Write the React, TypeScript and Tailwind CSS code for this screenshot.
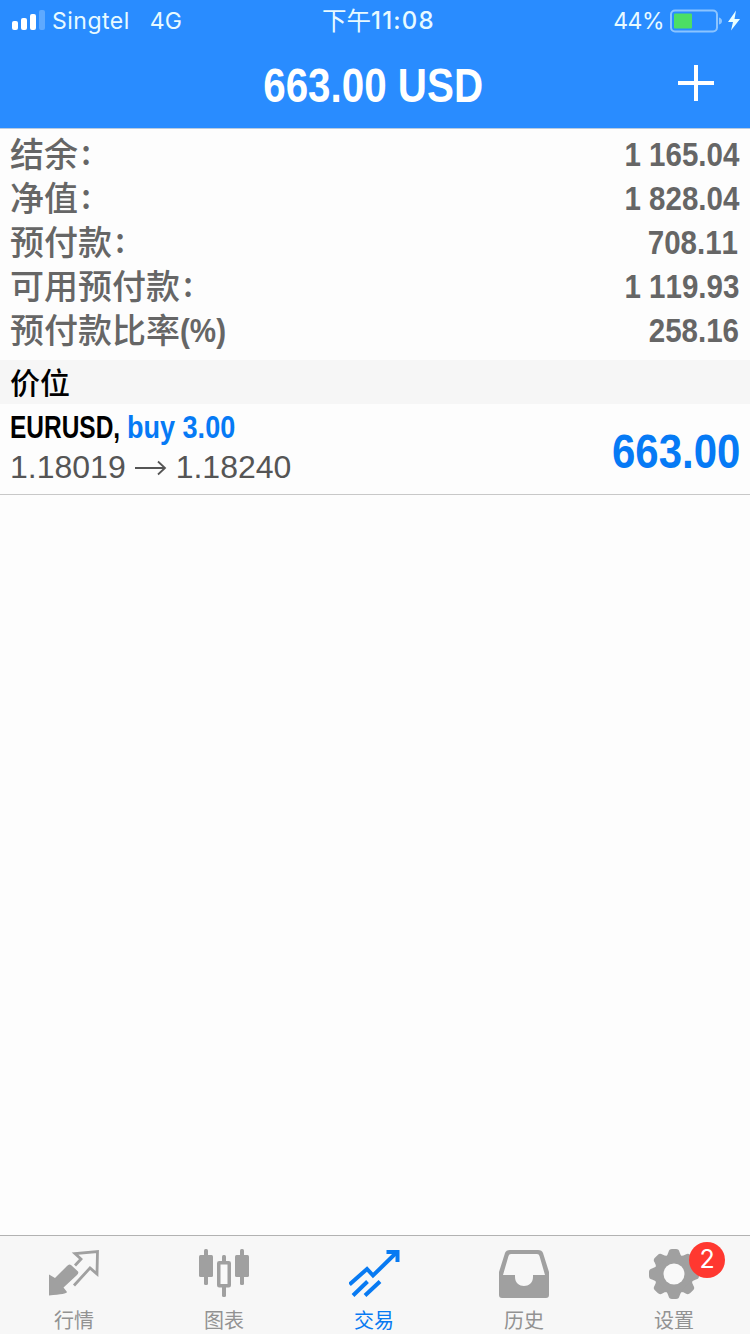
import React from "react";

const bold = "font-['Liberation_Sans','Noto_Sans_CJK_SC',sans-serif] font-bold whitespace-pre [font-kerning:none]";

const account = [
  { label: "结余", colon: true, value: "1 165.04" },
  { label: "净值", colon: true, value: "1 828.04" },
  { label: "预付款", colon: true, value: "708.11" },
  { label: "可用预付款", colon: true, value: "1 119.93" },
  { label: "预付款比率", colon: false, value: "258.16" },
];

function StatusBar() {
  return (
    <div className="flex h-[42px] items-center font-['Inter','Noto_Sans_CJK_SC',sans-serif] text-[23px] leading-[42px] text-[#e8faff]">
      <div className="flex w-[322px] items-center pl-3">
        <svg width="34" height="22" viewBox="0 0 34 22" className="mr-[6px]" fill="#fff">
          <rect x="0" y="11" width="6" height="9" rx="2" />
          <rect x="9" y="8" width="6" height="12" rx="2" />
          <rect x="18" y="4" width="6" height="16" rx="2" />
          <rect x="27" y="0" width="6" height="20" rx="2" opacity="0.25" />
        </svg>
        <span className="tracking-[0.5px]">Singtel</span>
        <span className="ml-[20px]">4G</span>
      </div>
      <span className="font-['Noto_Sans_CJK_SC',sans-serif] text-[24.500px] leading-[40px] pb-[2px]">下午</span>
      <span className="text-[24px] font-medium tracking-[1.200px]">11:08</span>
      <div className="flex flex-1 items-center justify-end pr-[9px]">
        <span className="tracking-[-0.5px]">44%</span>
        <svg width="72" height="24" viewBox="0 0 72 24" className="ml-[5px]">
          <rect x="2" y="1.500" width="46" height="21" rx="4" fill="none" stroke="#8bc4ff" strokeWidth="2" />
          <rect x="5" y="4.500" width="18" height="15" rx="1" fill="#4cde65" />
          <path d="M50 8.500Q53 9.500 53 12Q53 14.500 50 15.500Z" fill="#8bc4ff" />
          <path d="M67 1.500L59 13H64L62 21.500L71 10H65.500Z" fill="#eaffff" />
        </svg>
      </div>
    </div>
  );
}

function QuotesIcon() {
  return (
    <svg width="52" height="50" viewBox="0 0 52 50">
      <path d="M0 25.500L6 29L18 17Q20 14.500 22 16L29 22.500Q30 24 28 26L14.500 38.500L18 43Q18 45 0 46.500Z" fill="#a0a0a0" />
      <path d="M26 16.500L32 10L26 4.500L48.500 2.500L48 25L41 19L25 36.500" fill="none" stroke="#a0a0a0" strokeWidth="2.800" />
    </svg>
  );
}

function ChartsIcon() {
  return (
    <svg width="52" height="50" viewBox="0 0 52 50" fill="#a0a0a0">
      <rect x="5" y="0" width="4" height="36" rx="1.500" />
      <rect x="0" y="6" width="14" height="22" rx="1.500" />
      <rect x="41" y="0" width="4" height="36" rx="1.500" />
      <rect x="36" y="6" width="14" height="22" rx="1.500" />
      <rect x="23" y="6" width="4" height="42" rx="1.500" />
      <rect x="19.750" y="13.750" width="10.500" height="23" rx="0.500" fill="#f9f9f9" stroke="#a0a0a0" strokeWidth="3.500" />
    </svg>
  );
}

function TradeIcon() {
  return (
    <svg width="52" height="50" viewBox="0 0 52 50" fill="none" stroke="#087af2" strokeWidth="4">
      <path d="M0.500 35.500L18 20L24 26.500L47 4" />
      <path d="M37.500 3H48.500V13" />
      <path d="M4 46.500L18.500 32.500M16 46.500L31 32.500" />
    </svg>
  );
}

function HistoryIcon() {
  return (
    <svg width="52" height="50" viewBox="0 0 52 50">
      <path d="M11 1H39Q43 1 44 4L50 23V46Q50 49 47 49H3Q0 49 0 46V23L6 4Q7 1 11 1ZM12 5Q10 5 9.500 7L4 26H16V28C16 40 34 40 34 28V26H46L40.500 7Q40 5 38 5Z" fill="#a0a0a0" fillRule="evenodd" />
    </svg>
  );
}

function GearIcon() {
  return (
    <svg width="52" height="50" viewBox="0 0 52 50">
      <g fill="#a0a0a0">
        <circle cx="25" cy="25" r="19" />
        {[0, 45, 90, 135, 180, 225, 270, 315].map((a) => (
          <path key={a} d="M16 8.500Q19 6 19.500 3Q20 0 23 0H27Q30 0 30.500 3Q31 6 34 8.500Z" transform={`rotate(${a} 25 25)`} />
        ))}
      </g>
      <circle cx="25" cy="25" r="10.500" fill="#f9f9f9" />
    </svg>
  );
}

const tabs = [
  { label: "行情", icon: <QuotesIcon /> },
  { label: "图表", icon: <ChartsIcon /> },
  { label: "交易", icon: <TradeIcon />, active: true },
  { label: "历史", icon: <HistoryIcon /> },
  { label: "设置", icon: <GearIcon />, badge: "2" },
];

export default function App() {
  return (
    <div className="flex h-[1334px] w-[750px] flex-col overflow-hidden bg-[#fdfdfd]">
      <header className="h-[129px] border-b border-[#b8cbe0] bg-[#298cff]">
        <StatusBar />
        <div className="grid h-[84px] grid-cols-[1fr_auto_1fr] items-center">
          <span />
          <h1 className={`${bold} mr-[3px] origin-center scale-x-[0.832] pt-[2px] text-[48.500px] leading-[82px] text-white`}>663.00 USD</h1>
          <svg width="36" height="36" viewBox="0 0 36 36" className="mr-9 mb-[3px] justify-self-end" stroke="#fff" strokeWidth="4">
            <path d="M0 18H36M18 0V36" />
          </svg>
        </div>
      </header>

      <section className="h-[231px] px-[10px] pt-[3px] text-[#666]">
        {account.map((r) => (
          <div key={r.label} className="flex h-11 items-center justify-between">
            <div className="flex items-center pb-[3px] font-['Noto_Sans_CJK_SC',sans-serif] text-[34px] leading-[41px] font-medium">
              <span>{r.label}</span>
              {r.colon ? (
                <span className="ml-[3px] pb-[5px]">:</span>
              ) : (
                <span className={`${bold} origin-left scale-x-[0.87] pt-[3px]`}>(%)</span>
              )}
            </div>
            <span className={`${bold} origin-right scale-x-[0.868] text-[34px] leading-[44px] ${r.value.endsWith("11") ? "mr-[2px]" : "mr-px"}`}>{r.value}</span>
          </div>
        ))}
      </section>

      <div className="h-11 bg-[#f6f6f6] px-[10px] font-['Noto_Sans_CJK_SC',sans-serif] text-[30px] leading-[42px] font-medium text-black">
        价位
      </div>

      <div className="flex h-[91px] items-center justify-between border-b border-[#c8c8c8] px-[10px]">
        <div className="pb-[3px]">
          <div className={`${bold} flex text-[32px] leading-[40px]`}>
            <span className="w-[117px] origin-left scale-x-[0.765] text-black">EURUSD,</span>
            <span className="origin-left scale-x-[0.845] text-[#067af5]">buy 3.00</span>
          </div>
          <div className="flex items-center font-['Liberation_Sans',sans-serif] text-[32px] leading-[41px] text-[#555]">
            <span>1.18019</span>
            <svg width="32" height="16" viewBox="0 0 32 16" className="mx-[9px]" fill="none" stroke="#555" strokeWidth="1.800">
              <path d="M0 8H30M23 1.500L30 8L23 14.500" />
            </svg>
            <span>1.18240</span>
          </div>
        </div>
        <span className={`${bold} origin-right scale-x-[0.865] pt-[3px] text-[48.500px] leading-[60px] text-[#067af5]`}>663.00</span>
      </div>

      <main className="flex-1" />

      <nav className="grid h-[99px] grid-cols-5 border-t border-[#b2b2b2] bg-[#f7f7f7]">
        {tabs.map((t) => (
          <div key={t.label} className={`flex flex-col items-center pt-[13px] ${t.active ? "text-[#087af2]" : "text-[#929292]"}`}>
            <div className="relative">
              {t.icon}
              {t.badge && (
                <span className="absolute -top-[7px] left-[40px] flex size-9 items-center justify-center rounded-full bg-[#ff3830] font-['Inter',sans-serif] text-[25px] text-white">
                  {t.badge}
                </span>
              )}
            </div>
            <span className="mt-[7px] mr-[2px] font-['Noto_Sans_CJK_SC',sans-serif] text-[20px] leading-[28px]">{t.label}</span>
          </div>
        ))}
      </nav>
    </div>
  );
}
